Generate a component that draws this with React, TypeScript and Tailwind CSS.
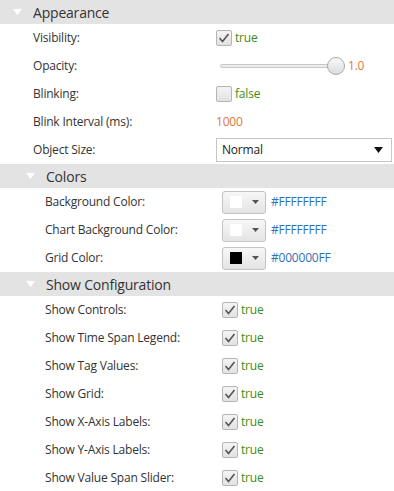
import React from 'react';

const font = { fontFamily: '"Open Sans", "Noto Sans", Arial, sans-serif' };

function Header({ title, indent }: { title: string; indent: boolean }) {
    return (
        <div className={`flex items-center h-6 bg-[#e3e3e3] ${indent ? 'pl-[26px]' : 'pl-[13px]'}`}>
            <svg width="9" height="6" viewBox="0 0 9 6" className="shrink-0">
                <path d="M0 0 L9 0 L4.5 6 Z" fill="#ffffff" />
            </svg>
            <span className="ml-[11px] text-[14px] text-[#333]">{title}</span>
        </div>
    );
}

function Check({ on }: { on: boolean }) {
    return (
        <div className="w-4 h-4 rounded-[2px] border border-[#b5b5b5] bg-gradient-to-b from-[#f4f4f4] to-[#e2e2e2] flex items-center justify-center shrink-0">
            {on && (
                <svg width="12" height="10" viewBox="0 0 12 10">
                    <path d="M1.5 5 L4.5 8.5 L10.5 1" fill="none" stroke="#555" strokeWidth="1.6" />
                </svg>
            )}
        </div>
    );
}

function BoolValue({ on }: { on: boolean }) {
    return (
        <div className="flex items-center gap-[3px]">
            <Check on={on} />
            <span className="text-[#3c8c14]">{on ? 'true' : 'false'}</span>
        </div>
    );
}

function ColorValue({ swatch, hex }: { swatch: string; hex: string }) {
    return (
        <div className="flex items-center gap-[5px]">
            <div className="w-[44px] h-[23px] rounded-[3px] border border-[#c3c3c3] bg-gradient-to-b from-[#f7f7f7] to-[#e4e4e4] flex items-center pl-[7px]">
                <div className="w-3 h-3" style={{ background: swatch }} />
                <svg width="7" height="4" viewBox="0 0 7 4" className="ml-[10px]">
                    <path d="M0 0 L7 0 L3.5 4 Z" fill="#555" />
                </svg>
            </div>
            <span className="text-[#2f70b5]">{hex}</span>
        </div>
    );
}

function Row({ label, nested, children }: { label: string; nested: boolean; children: React.ReactNode }) {
    return (
        <div className="flex items-center h-7 text-[12px]">
            <div className={`${nested ? 'pl-[45px] w-[222px]' : 'pl-[33px] w-[216px]'} text-[#333] shrink-0`}>{label}</div>
            <div className="flex-1 flex items-center">{children}</div>
        </div>
    );
}

export default function App() {
    const showRows = [
        'Show Controls:',
        'Show Time Span Legend:',
        'Show Tag Values:',
        'Show Grid:',
        'Show X-Axis Labels:',
        'Show Y-Axis Labels:',
        'Show Value Span Slider:',
    ];

    return (
        <div className="w-[394px] h-[491px] bg-white overflow-hidden tracking-[-0.2px]" style={font}>
            <Header title="Appearance" indent={false} />
            <Row label="Visibility:" nested={false}>
                <BoolValue on={true} />
            </Row>
            <Row label="Opacity:" nested={false}>
                <div className="flex items-center gap-[3px] pl-[4px]">
                    <div className="relative w-[125px] h-[18px] flex items-center">
                        <div className="w-full h-[4px] rounded-full border border-[#c8c8c8] bg-[#ececec]" />
                        <div className="absolute right-0 top-0 w-[18px] h-[18px] rounded-full border border-[#a8a8a8] bg-gradient-to-b from-[#fafafa] to-[#dcdcdc]" />
                    </div>
                    <span className="text-[#e0773a]">1.0</span>
                </div>
            </Row>
            <Row label="Blinking:" nested={false}>
                <BoolValue on={false} />
            </Row>
            <Row label="Blink Interval (ms):" nested={false}>
                <span className="text-[#e0773a]">1000</span>
            </Row>
            <Row label="Object Size:" nested={false}>
                <div className="w-[176px] h-[24px] border border-[#c6c6c6] bg-white flex items-center justify-between pl-[5px] pr-[8px] text-[#222]">
                    <span>Normal</span>
                    <svg width="9" height="6" viewBox="0 0 9 6">
                        <path d="M0 0 L9 0 L4.5 6 Z" fill="#111" />
                    </svg>
                </div>
            </Row>

            <Header title="Colors" indent={true} />
            <Row label="Background Color:" nested={true}>
                <ColorValue swatch="#ffffff" hex="#FFFFFFFF" />
            </Row>
            <Row label="Chart Background Color:" nested={true}>
                <ColorValue swatch="#ffffff" hex="#FFFFFFFF" />
            </Row>
            <Row label="Grid Color:" nested={true}>
                <ColorValue swatch="#000000" hex="#000000FF" />
            </Row>

            <Header title="Show Configuration" indent={true} />
            {showRows.map(label => (
                <Row key={label} label={label} nested={true}>
                    <BoolValue on={true} />
                </Row>
            ))}
        </div>
    );
}
